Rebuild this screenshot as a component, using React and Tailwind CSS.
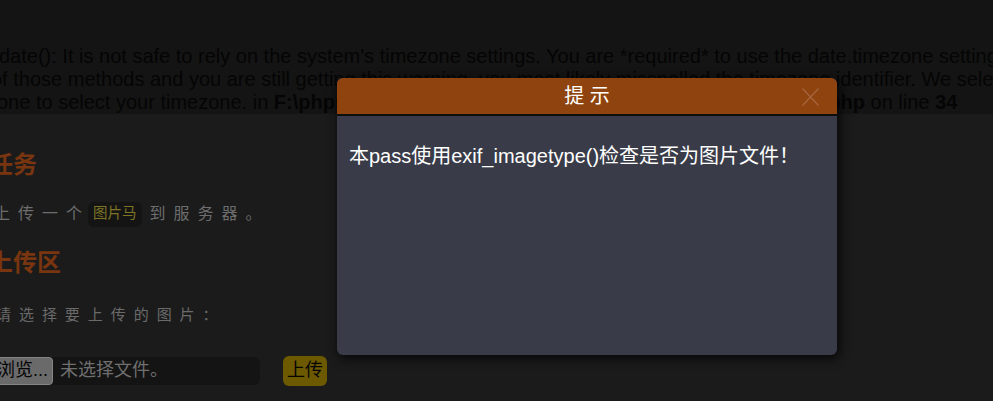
export default function App() {
  return (
    <div
      className="relative w-[993px] h-[401px] overflow-hidden bg-[#1b1b1b]"
      style={{ fontFamily: '"Liberation Sans", "Noto Sans CJK SC", sans-serif' }}
    >
      {/* PHP warning block */}
      <div className="h-[114px] bg-[#141414] pt-[45px] text-[20px] leading-[23px] text-[#050505] whitespace-nowrap">
        <div className="-ml-[1px]">
          date(): It is not safe to rely on the system's timezone settings. You are *required* to use the date.timezone setting or the date_default_timezone_set() function.
        </div>
        <div className="-ml-[9px]">
          of those methods and you are still getting this warning, you most likely misspelled the timezone identifier. We selected the timezone 'UTC' for now, but please set date.timezone
        </div>
        <div className="-ml-[3px]">
          one to select your timezone. in <b>F:\phpstudy_pro\WWW\upload-labs-master\Pass-15\index.php</b> on line <b>34</b>
        </div>
      </div>

      {/* Page content */}
      <div className="flex flex-col whitespace-nowrap">
        <div className="mt-[36px] -ml-[11px] h-[30px] leading-[30px] text-[24px] font-bold text-[#78350f]">
          任务
        </div>
        <div className="mt-[19px] -ml-[6px] h-[30px] flex items-center text-[16px] tracking-[0.5em] text-[#6d6d6d]">
          <span>上传一个</span>
          <span className="inline-flex items-center h-[25px] px-[5px] rounded-[6px] bg-[#141414] text-[14.5px] tracking-normal text-[#7d7524] mr-[8px] -ml-[2px]">
            图片马
          </span>
          <span>到服务器。</span>
        </div>
        <div className="mt-[19px] -ml-[11px] h-[30px] leading-[30px] text-[24px] font-bold text-[#78350f]">
          上传区
        </div>
        <div className="mt-[22px] -ml-[4px] h-[30px] leading-[30px] text-[15px] tracking-[0.53em] text-[#6a6a6a]">
          请选择要上传的图片：
        </div>
        <div className="mt-[25px] -ml-[8px] flex items-center h-[31px]">
          <div className="flex items-center h-[28px] w-[268px] rounded-[6px] bg-[#141414]">
            <div className="h-[28px] w-[61px] flex items-center justify-center rounded-[4px] border border-[#858585] bg-[#6a6a6a] text-[18px] text-[#050505]">
              浏览...
            </div>
            <div className="pl-[7px] text-[18px] text-[#6f6f6f]">未选择文件。</div>
          </div>
          <div className="ml-[23px] h-[30px] w-[44px] flex items-center justify-center rounded-[6px] bg-[#6c5900] text-[18px] text-[#050505]">
            上传
          </div>
        </div>
      </div>

      {/* Modal dialog (overlay) */}
      <div className="absolute left-[337px] top-[78px] w-[500px] h-[277px] flex flex-col rounded-[6px] bg-[#393c48] shadow-[2px_3px_12px_rgba(0,0,0,0.85)]">
        <div className="relative h-[38px] shrink-0 flex items-center justify-center rounded-t-[6px] bg-[#8f4410] border-b-2 border-[#0e0e0e]">
          <span className="text-[20px] text-white leading-none">提 示</span>
          <svg
            className="absolute right-[18px] top-[10px]"
            width="17"
            height="18"
            viewBox="0 0 17 18"
          >
            <path d="M0.5 0.5 L16.5 17.5 M16.5 0.5 L0.5 17.5" stroke="#a7653f" strokeWidth="1.2" fill="none" />
          </svg>
        </div>
        <div className="px-[12px] pt-[25px] text-[20px] leading-[30px] text-white">
          本pass使用exif_imagetype()检查是否为图片文件！
        </div>
      </div>
    </div>
  );
}
